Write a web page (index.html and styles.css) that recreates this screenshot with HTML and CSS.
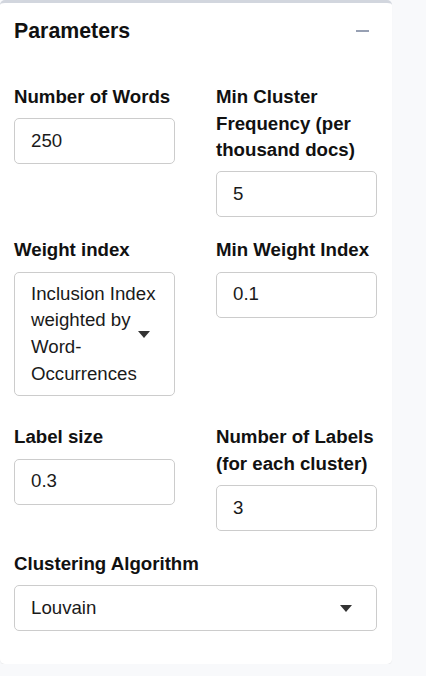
FILE: index.html
```html
<!DOCTYPE html>
<html lang="en">
<head>
<meta charset="utf-8">
<title>Parameters</title>
<link rel="stylesheet" href="styles.css">
</head>
<body>
<div class="box">
  <div class="box-header">
    <h3 class="box-title">Parameters</h3>
    <span class="collapse-btn" aria-label="collapse"></span>
  </div>
  <div class="box-body">
    <div class="form-group">
      <label class="label">Number of Words</label>
      <div class="input">250</div>
    </div>
    <div class="form-group">
      <label class="label">Min Cluster Frequency (per thousand docs)</label>
      <div class="input">5</div>
    </div>
    <div class="form-group tall">
      <label class="label">Weight index</label>
      <div class="select wrap">Inclusion Index weighted by Word-Occurrences<span class="caret"></span></div>
    </div>
    <div class="form-group">
      <label class="label">Min Weight Index</label>
      <div class="input">0.1</div>
    </div>
    <div class="form-group">
      <label class="label">Label size</label>
      <div class="input">0.3</div>
    </div>
    <div class="form-group">
      <label class="label">Number of Labels (for each cluster)</label>
      <div class="input">3</div>
    </div>
    <div class="form-group full">
      <label class="label">Clustering Algorithm</label>
      <div class="select">Louvain<span class="caret"></span></div>
    </div>
  </div>
</div>
</body>
</html>
```
FILE: styles.css
```css
html, body {
  margin: 0;
  padding: 0;
}
body {
  background: #f8f9fb;
  font-family: "Liberation Sans", Arial, sans-serif;
  color: #111;
}
.box {
  width: 392px;
  background: #fff;
  border-top: 3px solid #d2d6de;
  border-radius: 5px;
  box-shadow: 0 1px 1px rgba(0, 0, 0, 0.06);
}
.box-header {
  display: flex;
  justify-content: space-between;
  align-items: center;
  padding: 17px 23px 13px 14px;
}
.box-title {
  margin: 0;
  font-size: 21.33px;
  line-height: 1.1;
  font-weight: 700;
  color: #111;
}
.collapse-btn {
  display: block;
  width: 13px;
  height: 2px;
  background: #97a0b3;
  margin-top: -2px;
}
.box-body {
  display: grid;
  grid-template-columns: 161px 161px;
  column-gap: 41px;
  row-gap: 20px;
  padding: 27.5px 15px 33px 14px;
}
.form-group {
  display: flex;
  flex-direction: column;
  align-items: flex-start;
}
.form-group.tall {
  padding-bottom: 8px;
}
.form-group.full {
  grid-column: 1 / -1;
}
.label {
  display: block;
  font-size: 18.67px;
  line-height: 26.67px;
  font-weight: 700;
  margin-bottom: 7.5px;
  color: #111;
}
.input, .select {
  box-sizing: border-box;
  width: 100%;
  min-height: 46px;
  border: 1px solid #ccc;
  border-radius: 5px;
  padding: 8.5px 16px;
  font-size: 18.67px;
  line-height: 26.67px;
  color: #1a1a1a;
  background: #fff;
}
.select {
  position: relative;
}
.select.wrap {
  padding: 8px 16px;
}
.caret {
  position: absolute;
  right: 24px;
  top: 50%;
  margin-top: -3px;
  width: 0;
  height: 0;
  border-left: 6.5px solid transparent;
  border-right: 6.5px solid transparent;
  border-top: 7px solid #333;
}
```
